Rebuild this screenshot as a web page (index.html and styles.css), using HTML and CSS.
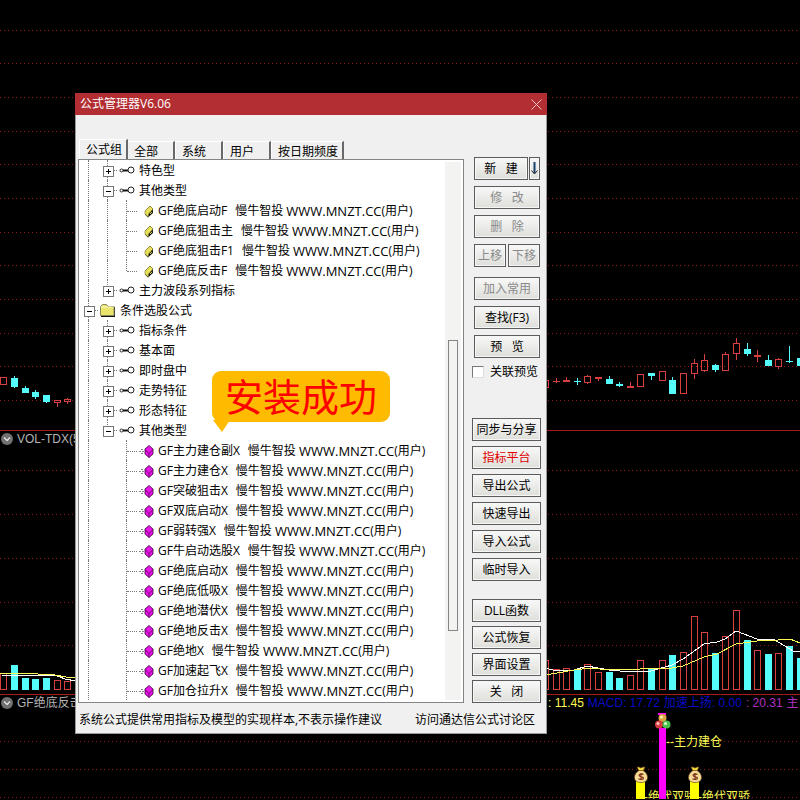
FILE: index.html
```
<!DOCTYPE html>
<html lang="zh-CN">

<head>
    <meta charset="UTF-8">
    <meta name="viewport" content="width=device-width, initial-scale=1.0">
    <title>公式管理器V6.06</title>
    <link rel="stylesheet" href="styles.css">
</head>

<body>
    <!-- shared icons -->
    <svg class="defs" width="0" height="0" aria-hidden="true">
        <symbol id="i-key" viewBox="0 0 16 16">
            <circle cx="2.500" cy="7.500" r="1.500" fill="none" stroke="#222" />
            <path d="M4 7.500h5" stroke="#111" stroke-width="2" />
            <circle cx="12" cy="7" r="3" fill="none" stroke="#222" />
        </symbol>
        <symbol id="i-folder" viewBox="0 0 16 16">
            <path d="M1 4l2-2h4l2 2h6v10H1z" fill="#111" />
            <path d="M0.500 12.500v-9l2-2h4l1.500 2h6v9z" fill="#e9e56c" stroke="#8a8a60" />
            <path d="M1.500 5v-1h12" stroke="#fffbd0" fill="none" />
        </symbol>
        <symbol id="i-yellow" viewBox="0 0 16 16">
            <path d="M7 8l5-5 3 3v4l-5 4.500-3-3z" fill="#111" />
            <path d="M7 8l5-5 3 3-4.500 5v3L7 11z" fill="#e8e05a" stroke="#77722a" stroke-width=".6" />
            <path d="M12 11l2-2.200" stroke="#e8e05a" />
        </symbol>
        <symbol id="i-purple" viewBox="0 0 16 16">
            <path d="M3 6.500h3M1 8.500h5M3 10.500h3" stroke="#888" stroke-dasharray="2 1" />
            <path d="M7 6l4-3.500L15 6v5l-4 3.500L7 11z" fill="#e815e8" stroke="#300030" stroke-width=".8" />
            <path d="M7.500 7l3.500 3.500L14.500 7M11 10.500v4" fill="none" stroke="#5a005a" stroke-width=".8" />
        </symbol>
        <symbol id="i-down" viewBox="0 0 12 12">
            <circle cx="6" cy="6" r="6" fill="#707070" />
            <path d="M3 4.500l3 3 3-3" fill="none" stroke="#e0e0e0" stroke-width="1.500" />
        </symbol>
        <symbol id="i-bag" viewBox="0 0 14 18">
            <path d="M3 1h2l2 1 2-1h2l-2 4H5z" fill="#ffe23a" stroke="#5b3a10" stroke-width=".7" />
            <path d="M5 4.500h4c3 2 4.500 4 4.500 7S11 16.500 7 16.500.500 14.500.500 11.500 2 6.500 5 4.500z" fill="#f5dc98" stroke="#6b4419" stroke-width=".7" />
            <path d="M9.500 8.500c-1-1-4.500-1-4.500.8 0 2 4.500 1 4.500 2.800 0 1.800-4 1.600-5 .5M7 7v7" fill="none" stroke="#7a2d12" stroke-width="1.200" />
        </symbol>
    </svg>

    <main class="terminal">
        <section class="panel">
            <svg class="chart" viewBox="0 0 800 431">
                <path class="grid" d="M0 30.500h800M0 63.500h800M0 97.500h800M0 131.500h800M0 164.500h800M0 198.500h800M0 232.500h800M0 265.500h800M0 299.500h800M0 333.500h800M0 366.500h800M0 400.500h800" />
                <path class="axis" d="M0 430.500h800" />
                <path class="up" d="M.5 377.500h6v7h-6zM54.500 400.500h6v2h-6zM57.500 403v4M64.500 399.500h6v2h-6zM67.500 402v2M67.500 398v1" />
                <path class="down" d="M11 378h7v9h-7zM14 376h1v12h-1zM22 388h7v5h-7zM25 386h1v2h-1zM32 392h7v5h-7zM35 390h1v9h-1zM43 395h7v7h-7zM46 402h1v1h-1z" />
                <path class="up" d="M542.500 380.500h6v7h-6zM553 381.500h7M556.500 378v5M563 380.500h7M563 381.500h7M566.500 377v3M584.500 376.500h6v6h-6zM587.500 375v1M587.500 383v1M595 377.500h7M595 378.500h7M598.500 379v2M627 386.500h7M627 387.500h7M630.500 382v4M637.500 374.500h6v12h-6zM659.500 371.500h6v9h-6zM680.500 373.500h6v20h-6zM691.500 363.500h6v10h-6zM694.500 359v4M694.500 374v5M701.500 360.500h6v10h-6zM704.500 354v6M704.500 371v1M722.500 354.500h6v16h-6zM725.500 352v2M733.500 343.500h6v10h-6zM736.500 338v5M736.500 354v6M754 355.500h7M754 356.500h7M757.500 350v12M775.500 359.500h6v7h-6zM778.500 358v1M778.500 367v2" />
                <path class="down" d="M574 381h7v1h-7zM577 378h1v7h-1zM606 379h7v5h-7zM609 376h1v3h-1zM616 384h7v2h-7zM619 382h1v5h-1zM648 373h7v3h-7zM651 376h1v4h-1zM669 380h7v14h-7zM672 377h1v3h-1zM712 365h7v5h-7zM715 364h1v8h-1zM744 349h7v5h-7zM747 343h1v13h-1zM765 360h7v6h-7zM768 355h1v5h-1zM786 361h7v1h-7zM789 346h1v17h-1zM797 358h3v8h-3z" />
            </svg>
        </section>

        <section class="panel">
            <header class="panel-head">
                <span class="panel-title"><svg class="drop"><use href="#i-down" /></svg>VOL-TDX(5,10)</span>
            </header>
            <svg class="chart" viewBox="0 447 800 248">
                <path class="grid" d="M0 470.500h800M0 514.500h800M0 558.500h800M0 602.500h800M0 645.500h800" />
                <path class="axis" d="M0 694.500h800" />
                <path class="up" d="M.5 673.500h6v16h-6zM54.500 680.500h6v9h-6zM64.500 681.500h6v8h-6zM542.500 660.500h6v29h-6zM553.500 669.500h6v20h-6zM563.500 668.500h6v21h-6zM584.500 664.500h6v25h-6zM595.500 672.500h6v17h-6zM627.500 675.500h6v14h-6zM637.500 660.500h6v29h-6zM659.500 660.500h6v29h-6zM680.500 652.500h6v37h-6zM691.500 616.500h6v73h-6zM701.500 632.500h6v57h-6zM722.500 636.500h6v53h-6zM733.500 610.500h6v79h-6zM754.500 650.500h6v39h-6zM775.500 653.500h6v36h-6z" />
                <path class="down" d="M11 665h7v25h-7zM22 678h7v12h-7zM32 679h7v11h-7zM43 678h7v12h-7zM574 670h7v20h-7zM606 672h7v18h-7zM616 678h7v12h-7zM648 668h7v22h-7zM669 655h7v35h-7zM712 653h7v37h-7zM744 640h7v50h-7zM765 654h7v36h-7zM786 646h7v44h-7zM797 658h3v32h-3z" />
                <path class="ma-short" d="M2 676l10-1h43l10 4 11 2M545 668l8 2h21l13-4 11 2 11 2 21 2 21-1 21-6 11-6 21-15 13-2 8-3 11-8 21 8h16l12 7 8 5 7 1" />
                <path class="ma-long" d="M0 673h20l35 2 11 2 10 1M545 675l18-3 11-2 16-2 19 2 31-1 32-1 11-2 21-9 13-3 19-10 21-3 21-1 12-1 10 4" />
            </svg>
        </section>

        <section class="panel">
            <header class="panel-head">
                <span class="panel-title"><svg class="drop"><use href="#i-down" /></svg>GF绝底反击</span>
                <span class="c-yellow">: 11.45</span>
                <span class="c-blue">MACD: 17.72</span>
                <span class="c-blue">加速上扬: 0.00</span>
                <span class="c-purple">: 20.31</span>
                <span class="c-purple">主</span>
            </header>
            <svg class="chart" viewBox="0 712 800 88">
                <path class="grid" d="M0 742.500h800M0 770.500h800M0 798.500h800" />
                <text class="signal" x="644" y="802">-绝代双骄</text>
                <text class="signal" x="698" y="802">-绝代双骄</text>
                <path class="bar-yellow" d="M636 782h9v18h-9zM690 782h9v18h-9z" />
                <path class="bar-pink" d="M659 729h7v71h-7zM658 714h8v2h-8z" />
                <circle cx="662.500" cy="719" r="4" fill="#d9a441" />
                <circle cx="661.500" cy="718" r="1.500" fill="#fff0b0" />
                <circle cx="659" cy="725.500" r="4" fill="#d83b3b" />
                <circle cx="658" cy="724.500" r="1.500" fill="#ffc4c4" />
                <circle cx="666.500" cy="725.500" r="4" fill="#4cc04c" />
                <circle cx="665.500" cy="724.500" r="1.500" fill="#d2ffd2" />
                <text class="signal" x="666" y="747">--主力建仓</text>
                <use href="#i-bag" x="634" y="767" width="14" height="18" />
                <use href="#i-bag" x="688" y="767" width="14" height="18" />
            </svg>
        </section>

        <div class="dialog" role="dialog" aria-labelledby="dialogTitle">
            <header class="titlebar">
                <h1 id="dialogTitle">公式管理器V6.06</h1>
                <button class="close" aria-label="关闭窗口">
                    <svg width="11" height="11"><path d="M.5.5l10 10M10.500.5l-10 10" stroke="#f0c4c4" fill="none" /></svg>
                </button>
            </header>

            <div class="content">
                <div class="left">
                    <nav class="tabs">
                        <button class="tab active">公式组</button>
                        <button class="tab">全部</button>
                        <button class="tab">系统</button>
                        <button class="tab">用户</button>
                        <button class="tab">按日期频度</button>
                    </nav>
                    <div class="pane">
                        <ul class="tree">
                            <li><i class="v"></i><i class="v box plus"></i><svg><use href="#i-key" /></svg>特色型</li>
                            <li><i class="v"></i><i class="v box"></i><svg><use href="#i-key" /></svg>其他类型</li>
                            <li><i class="v"></i><i class="v"></i><i class="v h"></i><svg><use href="#i-yellow" /></svg><b>GF绝底启动F</b>慢牛智投 <span class="site">WWW.MNZT.CC</span>(用户)</li>
                            <li><i class="v"></i><i class="v"></i><i class="v h"></i><svg><use href="#i-yellow" /></svg><b>GF绝底狙击主</b>慢牛智投 <span class="site">WWW.MNZT.CC</span>(用户)</li>
                            <li><i class="v"></i><i class="v"></i><i class="v h"></i><svg><use href="#i-yellow" /></svg><b>GF绝底狙击F1</b>慢牛智投 <span class="site">WWW.MNZT.CC</span>(用户)</li>
                            <li><i class="v"></i><i class="v"></i><i class="v h end"></i><svg><use href="#i-yellow" /></svg><b>GF绝底反击F</b>慢牛智投 <span class="site">WWW.MNZT.CC</span>(用户)</li>
                            <li><i class="v"></i><i class="v box plus end"></i><svg><use href="#i-key" /></svg>主力波段系列指标</li>
                            <li><i class="v box"></i><svg><use href="#i-folder" /></svg>条件选股公式</li>
                            <li><i class="v"></i><i class="v box plus"></i><svg><use href="#i-key" /></svg>指标条件</li>
                            <li><i class="v"></i><i class="v box plus"></i><svg><use href="#i-key" /></svg>基本面</li>
                            <li><i class="v"></i><i class="v box plus"></i><svg><use href="#i-key" /></svg>即时盘中</li>
                            <li><i class="v"></i><i class="v box plus"></i><svg><use href="#i-key" /></svg>走势特征</li>
                            <li><i class="v"></i><i class="v box plus"></i><svg><use href="#i-key" /></svg>形态特征</li>
                            <li><i class="v"></i><i class="v box end"></i><svg><use href="#i-key" /></svg>其他类型</li>
                            <li><i class="v"></i><i></i><i class="v h"></i><svg><use href="#i-purple" /></svg><b>GF主力建仓副X</b>慢牛智投 <span class="site">WWW.MNZT.CC</span>(用户)</li>
                            <li><i class="v"></i><i></i><i class="v h"></i><svg><use href="#i-purple" /></svg><b>GF主力建仓X</b>慢牛智投 <span class="site">WWW.MNZT.CC</span>(用户)</li>
                            <li><i class="v"></i><i></i><i class="v h"></i><svg><use href="#i-purple" /></svg><b>GF突破狙击X</b>慢牛智投 <span class="site">WWW.MNZT.CC</span>(用户)</li>
                            <li><i class="v"></i><i></i><i class="v h"></i><svg><use href="#i-purple" /></svg><b>GF双底启动X</b>慢牛智投 <span class="site">WWW.MNZT.CC</span>(用户)</li>
                            <li><i class="v"></i><i></i><i class="v h"></i><svg><use href="#i-purple" /></svg><b>GF弱转强X</b>慢牛智投 <span class="site">WWW.MNZT.CC</span>(用户)</li>
                            <li><i class="v"></i><i></i><i class="v h"></i><svg><use href="#i-purple" /></svg><b>GF牛启动选股X</b>慢牛智投 <span class="site">WWW.MNZT.CC</span>(用户)</li>
                            <li><i class="v"></i><i></i><i class="v h"></i><svg><use href="#i-purple" /></svg><b>GF绝底启动X</b>慢牛智投 <span class="site">WWW.MNZT.CC</span>(用户)</li>
                            <li><i class="v"></i><i></i><i class="v h"></i><svg><use href="#i-purple" /></svg><b>GF绝底低吸X</b>慢牛智投 <span class="site">WWW.MNZT.CC</span>(用户)</li>
                            <li><i class="v"></i><i></i><i class="v h"></i><svg><use href="#i-purple" /></svg><b>GF绝地潜伏X</b>慢牛智投 <span class="site">WWW.MNZT.CC</span>(用户)</li>
                            <li><i class="v"></i><i></i><i class="v h"></i><svg><use href="#i-purple" /></svg><b>GF绝地反击X</b>慢牛智投 <span class="site">WWW.MNZT.CC</span>(用户)</li>
                            <li><i class="v"></i><i></i><i class="v h"></i><svg><use href="#i-purple" /></svg><b>GF绝地X</b>慢牛智投 <span class="site">WWW.MNZT.CC</span>(用户)</li>
                            <li><i class="v"></i><i></i><i class="v h"></i><svg><use href="#i-purple" /></svg><b>GF加速起飞X</b>慢牛智投 <span class="site">WWW.MNZT.CC</span>(用户)</li>
                            <li><i class="v"></i><i></i><i class="v h"></i><svg><use href="#i-purple" /></svg><b>GF加仓拉升X</b>慢牛智投 <span class="site">WWW.MNZT.CC</span>(用户)</li>
                        </ul>
                        <div class="scrollbar">
                            <div class="thumb"></div>
                        </div>
                    </div>
                </div>

                <div class="side">
                    <div class="group edit">
                        <div class="split new">
                            <button class="btn">新&nbsp;&nbsp; 建</button>
                            <button class="btn more" aria-label="更多"><svg width="7" height="13"><path d="M3.500 0v11" stroke="#16406e" stroke-width="2" /><path d="M.5 8.500l3 3.500 3-3.500" fill="none" stroke="#222" /></svg></button>
                        </div>
                        <button class="btn" disabled>修&nbsp;&nbsp; 改</button>
                        <button class="btn" disabled>删&nbsp;&nbsp; 除</button>
                        <div class="split">
                            <button class="btn" disabled>上移</button>
                            <button class="btn" disabled>下移</button>
                        </div>
                    </div>
                    <div class="group find">
                        <button class="btn" disabled>加入常用</button>
                        <button class="btn">查找(F3)</button>
                        <button class="btn">预&nbsp;&nbsp; 览</button>
                    </div>
                    <div class="check">
                        <input type="checkbox" id="linkPreview">
                        <label for="linkPreview">关联预览</label>
                    </div>
                    <div class="group share">
                        <button class="btn">同步与分享</button>
                        <button class="btn hot">指标平台</button>
                        <button class="btn">导出公式</button>
                        <button class="btn">快速导出</button>
                        <button class="btn">导入公式</button>
                        <button class="btn">临时导入</button>
                    </div>
                    <div class="group manage">
                        <button class="btn">DLL函数</button>
                        <button class="btn">公式恢复</button>
                        <button class="btn">界面设置</button>
                        <button class="btn">关&nbsp;&nbsp; 闭</button>
                    </div>
                </div>
            </div>

            <footer class="status">
                <span>系统公式提供常用指标及模型的实现样本,不表示操作建议</span>
                <a href="#">访问通达信公式讨论区</a>
            </footer>

            <div class="callout">安装成功</div>
        </div>
    </main>
</body>

</html>
```
FILE: styles.css
```
*,
html,
body {
    margin: 0;
    padding: 0;
    box-sizing: border-box;
}

body {
    background-color: #000;
    color: #000;
    font: 12px/20px "Open Sans", "Noto Sans CJK SC", sans-serif;
    overflow: hidden;
}

button,
input {
    font: inherit;
    color: inherit;
}

.defs {
    position: absolute;
}

.terminal {
    position: relative;
    min-height: 100vh;
    overflow: hidden;
}

/* chart panels */
.chart {
    display: block;
    width: 100%;
}

.chart path {
    fill: none;
    shape-rendering: crispEdges;
}

.chart .grid {
    stroke: #901616;
    stroke-dasharray: 1 3;
}

.chart .axis {
    stroke: #a81a1a;
}

.chart .up {
    stroke: #d84040;
}

.chart .down {
    fill: #54fcfc;
}

.chart .ma-short {
    stroke: #fff;
}

.chart .ma-long {
    stroke: #fcfc54;
}

.chart .bar-yellow {
    fill: #ff0;
}

.chart .bar-pink {
    fill: #f0f;
}

.signal {
    fill: #fcfc54;
    font: 12px "Liberation Sans", "Noto Sans CJK SC", sans-serif;
}

.panel-head {
    display: flex;
    gap: 4px;
    height: 16px;
    font: 12px/16px "Liberation Sans", "Noto Sans CJK SC", sans-serif;
    white-space: nowrap;
    overflow: hidden;
}

.panel-title {
    display: flex;
    flex: 0 0 68%;
    align-items: center;
    gap: 4px;
    padding-left: 1px;
    color: #b4b4b4;
}

.drop {
    width: 12px;
    height: 12px;
}

.c-yellow {
    color: #fcfc54;
}

.c-blue {
    color: #0a0ac8;
}

.c-purple {
    color: #b030c0;
}

/* dialog */
.dialog {
    position: absolute;
    top: 93px;
    left: 75px;
    width: 472px;
    border: 1px solid #999;
    border-top: 0;
    background-color: #f0f0f0;
}

.titlebar {
    display: flex;
    justify-content: space-between;
    align-items: center;
    height: 22px;
    margin: 0 -1px;
    padding: 0 5px;
    background-color: #b22e32;
    color: #fff;
}

.titlebar h1 {
    font-size: 12px;
    font-weight: 400;
}

.close {
    border: 0;
    background: none;
    line-height: 0;
}

.content {
    display: flex;
    gap: 8px;
    padding: 24px 5px 0 2px;
}

.left {
    flex: 1;
    min-width: 0;
}

.tabs {
    display: flex;
    align-items: flex-end;
    height: 20px;
    padding-left: 1px;
}

.tab {
    height: 18px;
    min-width: 48px;
    padding: 1px 4px 0 6px;
    border: 0;
    border-top: 1px solid #fff;
    border-left: 1px solid #fff;
    border-right: 2px solid #696969;
    background-color: #f0f0f0;
    line-height: 18px;
    text-align: left;
}

.tab.active {
    position: relative;
    height: 20px;
    margin-right: -1px;
}

.pane {
    display: flex;
    padding-right: 2px;
    border: 1px solid #848484;
    background-color: #fff;
}

.tree {
    flex: 1;
    padding-bottom: 2px;
    list-style: none;
}

.tree li {
    display: flex;
    height: 20px;
    line-height: 22px;
    white-space: pre;
}

.tree b {
    margin-right: 8px;
    font-weight: 400;
}

.tree svg {
    flex: none;
    width: 16px;
    height: 16px;
    margin: 3px 4px 0 2px;
}

.site {
    font-size: 13px;
}

/* one cell of the connecting lines */
.tree i {
    position: relative;
    flex: none;
    width: 19px;
    height: 20px;
}

.tree .v::before {
    content: "";
    position: absolute;
    top: 0;
    bottom: 0;
    left: 9px;
    border-left: 1px dotted #777;
}

.tree .end::before {
    bottom: 9px;
}

.tree .h::after {
    content: "";
    position: absolute;
    top: 11px;
    left: 10px;
    right: -1px;
    border-top: 1px dotted #777;
}

.tree .box {
    background: repeating-linear-gradient(90deg, #777 0 1px, #fff 1px 2px) 14px 10px / 6px 1px no-repeat;
}

.tree .box::after {
    content: "";
    position: absolute;
    top: 6px;
    left: 5px;
    width: 9px;
    height: 9px;
    border: 1px solid #777;
    background: linear-gradient(#000, #000) center / 5px 1px no-repeat #fff;
}

.tree .plus::after {
    background: linear-gradient(#000, #000) center / 5px 1px no-repeat, linear-gradient(#000, #000) center / 1px 5px no-repeat #fff;
}

.scrollbar {
    width: 16px;
    margin: 2px 0;
    padding: 178px 3px 0;
    background-color: #f3f3f2;
}

.thumb {
    height: 291px;
    border: 1px solid #848484;
    background-color: #f3f3f2;
}

.side {
    width: 69px;
    padding-top: 18px;
}

.group {
    display: flex;
    flex-direction: column;
    gap: 5px;
}

.edit,
.find {
    gap: 6px;
    padding: 0 1px 0 2px;
}

.find {
    margin-top: 10px;
}

.share {
    margin-top: 36px;
}

.manage {
    gap: 4px;
    margin-top: 18px;
}

.split {
    display: flex;
    gap: 2px;
}

.split .btn {
    flex: 1;
}

.new {
    gap: 1px;
}

.new .more {
    flex: 0 0 11px;
}

.btn {
    display: flex;
    justify-content: center;
    align-items: center;
    height: 23px;
    border: 1px solid #5c5c5c;
    background: linear-gradient(#f8f8f8, #dededa);
    box-shadow: inset 0 0 0 1px #f6f6f6;
    line-height: 20px;
    white-space: nowrap;
}

.btn:disabled {
    color: #8a8a8a;
}

.hot {
    color: #e00000;
}

.check {
    display: flex;
    align-items: center;
    gap: 6px;
    margin-top: 4px;
    white-space: nowrap;
}

.check input {
    flex: none;
    appearance: none;
    width: 12px;
    height: 12px;
    border: 1px solid #777;
    border-right-color: #ddd;
    border-bottom-color: #ddd;
    background-color: #fff;
}

.status {
    display: flex;
    justify-content: space-between;
    padding: 7px 11px 3px 3px;
}

.status a {
    color: inherit;
    text-decoration: none;
}

/* speech bubble over the tree */
.callout {
    position: absolute;
    top: 278px;
    left: 136px;
    width: 178px;
    height: 51px;
    border-radius: 9px;
    background-color: #fb0;
    color: #f00;
    font: 38px/48px "Noto Sans CJK SC", sans-serif;
    text-align: center;
}

.callout::after {
    content: "";
    position: absolute;
    top: 49px;
    left: 1px;
    border: solid transparent;
    border-width: 12px 8px 0 9px;
    border-top-color: #fb0;
}
```
